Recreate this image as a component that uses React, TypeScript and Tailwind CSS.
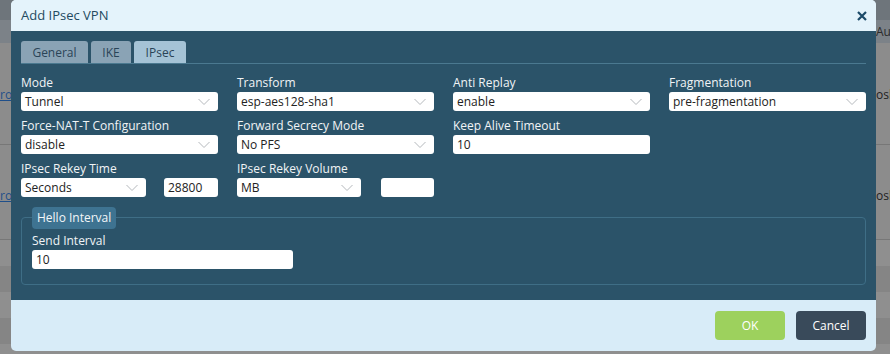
import React from "react";

const font = { fontFamily: '"Open Sans", "Liberation Sans", sans-serif' };

function Chevron() {
  return (
    <svg width="12" height="7" viewBox="0 0 12 7" className="absolute right-[8px] top-1/2 -translate-y-1/2">
      <path d="M0.5 0.5 L6 6 L11.5 0.5" fill="none" stroke="#b4b8bc" strokeWidth="1" />
    </svg>
  );
}

function Select({ value, className = "" }: { value: string; className?: string }) {
  return (
    <div className={"relative h-[19px] rounded-[3px] bg-white pl-[4px] text-[12px] leading-[19px] text-[#222] " + className}>
      {value}
      <Chevron />
    </div>
  );
}

function Input({ value, className = "" }: { value: string; className?: string }) {
  return (
    <div className={"h-[19px] rounded-[3px] bg-white pl-[4px] text-[12px] leading-[19px] text-[#222] " + className}>
      {value}
    </div>
  );
}

function Field({ label, children }: { label: string; children: React.ReactNode }) {
  return (
    <div className="flex flex-col">
      <div className="h-[16px] text-[12px] leading-[16px] text-[#f1f4f6]">{label}</div>
      <div className="mt-[1px]">{children}</div>
    </div>
  );
}

function Background() {
  const stripes = ["bg-[#8f8f8f]", "bg-[#858585]", "bg-[#8f8f8f]", "bg-[#858585]"];
  return (
    <div className="flex h-[354px] w-[890px] flex-col bg-[#8c8c8c] text-[12px]">
      <div className="h-[20px] bg-[#6e757b]" />
      <div className="flex h-[23px] items-center justify-end bg-[#7c8288] text-[#2b2b2b]">
        <span className="w-[14px] overflow-hidden whitespace-nowrap">Au</span>
      </div>
      <div className="flex h-[102px] items-center justify-between border-b border-[#777] pt-[3px]">
        <span className="w-[11px] overflow-hidden whitespace-nowrap text-[#1f4f8a] underline">ro</span>
        <span className="w-[14px] overflow-hidden whitespace-nowrap text-[#222]">osk</span>
      </div>
      <div className="flex h-[95px] items-center justify-between border-b border-[#777] pt-[8px]">
        <span className="w-[11px] overflow-hidden whitespace-nowrap text-[#1f4f8a] underline">ro</span>
        <span className="w-[14px] overflow-hidden whitespace-nowrap text-[#222]">osk</span>
      </div>
      {stripes.map((s, i) => (
        <div key={i} className={"h-[26px] " + s} />
      ))}
      <div className="flex-1 bg-[#8f8f8f]" />
    </div>
  );
}

export default function App() {
  return (
    <div className="relative h-[354px] w-[890px] overflow-hidden" style={font}>
      <Background />
      <div className="absolute left-[11px] top-0 flex h-[351px] w-[865px] flex-col overflow-hidden rounded-[5px] bg-[#d8ecf8]">
        <div className="flex h-[31px] items-center justify-between bg-[#e4f3fb] pl-[10px] pr-[9px]">
          <span className="text-[13px] text-[#234a60]">Add IPsec VPN</span>
          <svg width="10" height="10" viewBox="0 0 10 10">
            <path d="M1 1 L9 9 M9 1 L1 9" stroke="#1b4a68" strokeWidth="2.2" />
          </svg>
        </div>
        <div className="h-[269px] bg-[#2b5369] px-[10px] pt-[10px]">
          <div className="flex gap-[3px] border-b border-[#4b7990]">
            <div className="h-[22px] w-[67px] rounded-t-[3px] bg-[#8aa3b5] text-center text-[12px] leading-[23px] text-[#2a4457]">General</div>
            <div className="h-[22px] w-[40px] rounded-t-[3px] bg-[#8aa3b5] text-center text-[12px] leading-[23px] text-[#2a4457]">IKE</div>
            <div className="h-[22px] w-[52px] rounded-t-[3px] bg-[#a5c3d6] text-center text-[12px] leading-[23px] text-[#2a4457]">IPsec</div>
          </div>
          <div className="mt-[11px] grid grid-cols-4 gap-x-[19px] gap-y-[7px]">
            <Field label="Mode"><Select value="Tunnel" /></Field>
            <Field label="Transform"><Select value="esp-aes128-sha1" /></Field>
            <Field label="Anti Replay"><Select value="enable" /></Field>
            <Field label="Fragmentation"><Select value="pre-fragmentation" /></Field>
            <Field label="Force-NAT-T Configuration"><Select value="disable" /></Field>
            <Field label="Forward Secrecy Mode"><Select value="No PFS" /></Field>
            <Field label="Keep Alive Timeout"><Input value="10" /></Field>
            <div />
            <Field label="IPsec Rekey Time">
              <div className="flex justify-between">
                <Select value="Seconds" className="w-[125px]" />
                <Input value="28800" className="w-[54px]" />
              </div>
            </Field>
            <Field label="IPsec Rekey Volume">
              <div className="flex justify-between">
                <Select value="MB" className="w-[124px]" />
                <Input value="" className="w-[53px]" />
              </div>
            </Field>
          </div>
          <div className="relative mt-[20px] h-[68px] rounded-[4px] border border-[#3f6e86] px-[10px] pt-[15px]">
            <div className="absolute -top-[11px] left-[10px] h-[22px] rounded-[4px] bg-[#3e7391] px-[5px] text-[12px] leading-[22px] text-[#f3f6f8]">Hello Interval</div>
            <Field label="Send Interval"><Input value="10" className="w-[261px]" /></Field>
          </div>
        </div>
        <div className="flex flex-1 items-start justify-end gap-[11px] pr-[10px] pt-[11px]">
          <div className="flex h-[29px] w-[70px] items-center justify-center rounded-[4px] bg-[#9dd15d] text-[12px] text-white">OK</div>
          <div className="flex h-[29px] w-[70px] items-center justify-center rounded-[4px] bg-[#394a5a] text-[12px] text-white">Cancel</div>
        </div>
      </div>
    </div>
  );
}
